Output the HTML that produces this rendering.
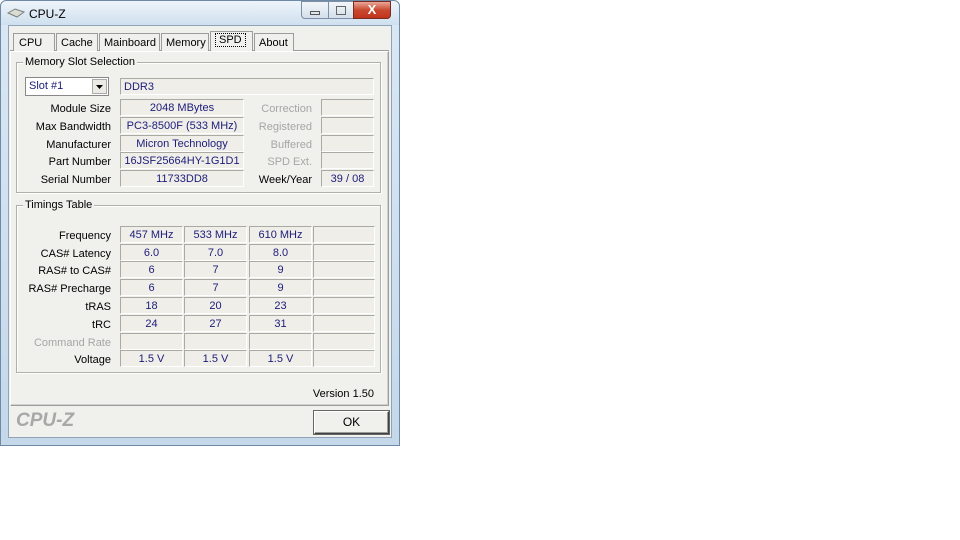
<!DOCTYPE html>
<html><head><style>
*{box-sizing:border-box;margin:0;padding:0}
body{width:960px;height:540px;background:#fff;position:relative;overflow:hidden;font-family:"Liberation Sans",sans-serif;font-size:11px;color:#000}
.a{position:absolute}
.f{position:absolute;height:17px;border:1px solid #aaa9a2;border-right-color:#fff;border-bottom-color:#fff;background:#efeee9;color:#1c1c7a;text-align:center;line-height:16px;font-size:11px}
.l{position:absolute;text-align:right;width:100px;font-size:11px;line-height:17px;margin-top:2px}
.g{color:#a6a6a6}
.grp{position:absolute;border:1px solid #b0afa8;box-shadow:inset 1px 1px 0 #fff,1px 1px 0 #fff}
.gt{position:absolute;background:#f0f0ec;padding:0 2px;font-size:11px;line-height:13px}
.tab{position:absolute;top:33px;height:18px;border:1px solid #9c9c9c;border-bottom:none;background:#f0f0ec;line-height:18px;padding-left:4px;font-size:11px}
</style></head><body>
<div class="a" style="left:0;top:0;width:400px;height:446px;background:linear-gradient(#dbe8f4,#c4d8ea);border:1px solid #6d8aa6;border-radius:6px 6px 0 0"></div>
<div class="a" style="left:1px;top:1px;width:398px;height:24px;background:linear-gradient(#eef4fa,#cfe0ef);border-radius:6px 6px 0 0"></div>
<svg class="a" style="left:7px;top:8px" width="18" height="10"><polygon points="1,5 8,1 17,4 10,9" fill="#d8dcd4" stroke="#7a8078"/></svg>
<div class="a" style="left:29px;top:7px;font-size:12px">CPU-Z</div>
<div class="a" style="left:301px;top:1px;width:28px;height:18px;border:1px solid #7d8fa5;border-radius:0 0 0 4px;background:linear-gradient(#f2f6fa,#d3dfeb)"><div class="a" style="left:8px;top:9px;width:10px;height:4px;border:1px solid #555"></div></div>
<div class="a" style="left:328px;top:1px;width:26px;height:18px;border:1px solid #7d8fa5;background:linear-gradient(#f2f6fa,#d3dfeb)"><div class="a" style="left:7px;top:4px;width:10px;height:9px;border:1px solid #666"></div></div>
<div class="a" style="left:353px;top:1px;width:38px;height:18px;border:1px solid #7a2a20;border-radius:0 0 4px 0;background:linear-gradient(#e9a899,#c9492f 50%,#c0341c);color:#fff;font-weight:bold;text-align:center;font-size:13px;line-height:16px">X</div>
<div class="a" style="left:8px;top:25px;width:384px;height:413px;background:#f0f0ec;border:1px solid #8ea3b8"></div>
<div class="a" style="left:10px;top:51px;width:379px;height:355px;border:1px solid #9c9c9c;border-top-color:#fff;border-left-color:#fff;box-shadow:inset -1px -1px 0 #d0d0cc"></div>
<div class="a" style="left:10px;top:50px;width:379px;height:1px;background:#9c9c9c"></div>
<div class="tab" style="left:13px;width:42px;padding-left:5px">CPU</div>
<div class="tab" style="left:56px;width:42px">Cache</div>
<div class="tab" style="left:99px;width:61px">Mainboard</div>
<div class="tab" style="left:161px;width:48px">Memory</div>
<div class="tab" style="left:210px;top:31px;height:20px;width:43px;line-height:17px"><span style="border:1px dotted #000;padding:0 3px">SPD</span></div>
<div class="tab" style="left:254px;width:40px">About</div>
<div class="grp" style="left:16px;top:62px;width:365px;height:131px"></div>
<div class="gt" style="left:23px;top:56px">Memory Slot Selection</div>
<div class="a" style="left:25px;top:77px;width:84px;height:19px;border:1px solid #888;background:#fff;line-height:17px;padding-left:3px;color:#1c1c7a">Slot #1<div class="a" style="right:1px;top:1px;width:15px;height:15px;background:#eceae4;border:1px solid #aaa"><svg width="13" height="13"><polygon points="3,5 10,5 6.5,9" fill="#000"/></svg></div></div>
<div class="f" style="left:120px;top:78px;width:254px;text-align:left;padding-left:3px">DDR3</div>
<div class="l" style="left:11px;top:99px">Module Size</div><div class="f" style="left:120px;top:99px;width:124px">2048 MBytes</div>
<div class="l" style="left:11px;top:117px">Max Bandwidth</div><div class="f" style="left:120px;top:117px;width:124px">PC3-8500F (533 MHz)</div>
<div class="l" style="left:11px;top:135px">Manufacturer</div><div class="f" style="left:120px;top:135px;width:124px">Micron Technology</div>
<div class="l" style="left:11px;top:152px">Part Number</div><div class="f" style="left:120px;top:152px;width:124px">16JSF25664HY-1G1D1</div>
<div class="l" style="left:11px;top:170px">Serial Number</div><div class="f" style="left:120px;top:170px;width:124px">11733DD8</div>
<div class="l g" style="left:212px;top:99px">Correction</div><div class="f" style="left:321px;top:99px;width:53px"></div>
<div class="l g" style="left:212px;top:117px">Registered</div><div class="f" style="left:321px;top:117px;width:53px"></div>
<div class="l g" style="left:212px;top:135px">Buffered</div><div class="f" style="left:321px;top:135px;width:53px"></div>
<div class="l g" style="left:212px;top:152px">SPD Ext.</div><div class="f" style="left:321px;top:152px;width:53px"></div>
<div class="l" style="left:212px;top:170px">Week/Year</div><div class="f" style="left:321px;top:170px;width:53px">39 / 08</div>
<div class="grp" style="left:16px;top:205px;width:365px;height:168px"></div>
<div class="gt" style="left:23px;top:199px">Timings Table</div>
<div class="l" style="left:11px;top:226px">Frequency</div>
<div class="f" style="left:120px;top:226px;width:63px">457 MHz</div><div class="f" style="left:184px;top:226px;width:63px">533 MHz</div><div class="f" style="left:249px;top:226px;width:63px">610 MHz</div><div class="f" style="left:313px;top:226px;width:62px"></div>
<div class="l" style="left:11px;top:244px">CAS# Latency</div>
<div class="f" style="left:120px;top:244px;width:63px">6.0</div><div class="f" style="left:184px;top:244px;width:63px">7.0</div><div class="f" style="left:249px;top:244px;width:63px">8.0</div><div class="f" style="left:313px;top:244px;width:62px"></div>
<div class="l" style="left:11px;top:261px">RAS# to CAS#</div>
<div class="f" style="left:120px;top:261px;width:63px">6</div><div class="f" style="left:184px;top:261px;width:63px">7</div><div class="f" style="left:249px;top:261px;width:63px">9</div><div class="f" style="left:313px;top:261px;width:62px"></div>
<div class="l" style="left:11px;top:279px">RAS# Precharge</div>
<div class="f" style="left:120px;top:279px;width:63px">6</div><div class="f" style="left:184px;top:279px;width:63px">7</div><div class="f" style="left:249px;top:279px;width:63px">9</div><div class="f" style="left:313px;top:279px;width:62px"></div>
<div class="l" style="left:11px;top:297px">tRAS</div>
<div class="f" style="left:120px;top:297px;width:63px">18</div><div class="f" style="left:184px;top:297px;width:63px">20</div><div class="f" style="left:249px;top:297px;width:63px">23</div><div class="f" style="left:313px;top:297px;width:62px"></div>
<div class="l" style="left:11px;top:315px">tRC</div>
<div class="f" style="left:120px;top:315px;width:63px">24</div><div class="f" style="left:184px;top:315px;width:63px">27</div><div class="f" style="left:249px;top:315px;width:63px">31</div><div class="f" style="left:313px;top:315px;width:62px"></div>
<div class="l g" style="left:11px;top:333px">Command Rate</div>
<div class="f" style="left:120px;top:333px;width:63px"></div><div class="f" style="left:184px;top:333px;width:63px"></div><div class="f" style="left:249px;top:333px;width:63px"></div><div class="f" style="left:313px;top:333px;width:62px"></div>
<div class="l" style="left:11px;top:350px">Voltage</div>
<div class="f" style="left:120px;top:350px;width:63px">1.5 V</div><div class="f" style="left:184px;top:350px;width:63px">1.5 V</div><div class="f" style="left:249px;top:350px;width:63px">1.5 V</div><div class="f" style="left:313px;top:350px;width:62px"></div>
<div class="a" style="left:290px;top:387px;width:84px;text-align:right;line-height:14px">Version 1.50</div>
<div class="a" style="left:16px;top:410px;font-size:19px;font-weight:bold;font-style:italic;color:#a8a8a8">CPU-Z</div>
<div class="a" style="left:314px;top:411px;width:75px;height:23px;border:1px solid #404040;border-top-color:#fff;border-left-color:#fff;box-shadow:inset -1px -1px 0 #9c9c9c,0 0 0 1px #666;background:#f0f0ec;text-align:center;line-height:21px;font-size:12px">OK</div>
</body></html>
